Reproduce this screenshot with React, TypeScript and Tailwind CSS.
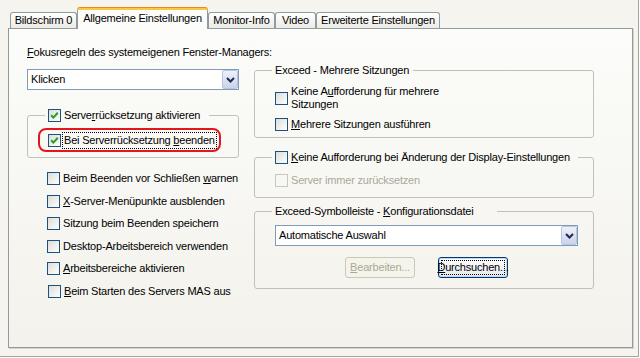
import React from 'react';

type BoxProps = { checked?: boolean; disabled?: boolean };

const Box = ({ checked, disabled }: BoxProps) => (
  <span
    className={`flex h-[13px] w-[13px] shrink-0 items-center justify-center border ${
      disabled
        ? 'border-[#cac8bb] bg-[#f7f7f3]'
        : 'border-[#1c5180] bg-gradient-to-br from-[#dcdcd7] to-white'
    }`}
  >
    {checked && (
      <svg width="9" height="9" viewBox="0 0 9 9">
        <polyline points="1.2,4.2 3.4,6.6 7.8,1.8" fill="none" stroke="#21a121" strokeWidth="2" />
      </svg>
    )}
  </span>
);

type CheckProps = BoxProps & { children: React.ReactNode; className?: string };

const Check = ({ checked, disabled, children, className = '' }: CheckProps) => (
  <div className={`flex items-center ${className}`}>
    <Box checked={checked} disabled={disabled} />
    <span className={`ml-[3px] whitespace-nowrap ${disabled ? 'text-[#aca899]' : ''}`}>{children}</span>
  </div>
);

const Combo = ({ value, className = '' }: { value: string; className?: string }) => (
  <div className={`flex h-[21px] items-center border border-[#7f9db9] bg-white pl-[3px] ${className}`}>
    <span className="flex-1">{value}</span>
    <span className="flex h-[19px] w-[16px] items-center justify-center rounded-[2px] border border-[#b9c5e0] bg-gradient-to-b from-[#eef1f8] to-[#c9d3ea]">
      <svg width="9" height="6" viewBox="0 0 9 6">
        <path d="M1 1 L4.5 4.5 L8 1" fill="none" stroke="#1f2a55" strokeWidth="2" />
      </svg>
    </span>
  </div>
);

const Tab = ({ children, w }: { children: React.ReactNode; w: string }) => (
  <div
    className={`flex h-[16px] items-center justify-center rounded-t-[3px] border border-b-0 border-[#919b9c] bg-gradient-to-b from-white to-[#ecebe5] ${w}`}
  >
    {children}
  </div>
);

const groupBox = 'rounded-[3px] border border-[#c3c1b6]';

export default function App() {
  return (
    <div className="h-[358px] w-[640px] overflow-hidden bg-[#f5f4ef] font-['Liberation_Sans',Arial,sans-serif] text-[11px] leading-[13px] tracking-[-0.2px] text-black shadow-[inset_-1px_-1px_0_#ffffff,inset_-2px_-2px_0_#a5a49c]">
      {/* tab strip */}
      <div className="flex h-[28px] items-end pl-[10px]">
        <Tab w="w-[67px]">Bildschirm 0</Tab>
        <div className="relative z-10 -mb-px flex h-[22px] w-[131px] flex-col">
          <div className="h-[3px] rounded-t-[3px] border-t border-[#e68b2c] bg-[#ffc73c]" />
          <div className="flex flex-1 items-center justify-center border-x border-[#919b9c] bg-[#fcfcfb] pb-[2px]">
            Allgemeine Einstellungen
          </div>
        </div>
        <Tab w="w-[67px]">Monitor-Info</Tab>
        <Tab w="w-[41px]">Video</Tab>
        <Tab w="w-[124px]">Erweiterte Einstellungen</Tab>
      </div>

      {/* tab page */}
      <div className="ml-[8px] flex h-[320px] w-[625px] gap-[15px] border border-[#919b9c] bg-gradient-to-b from-[#fcfcfa] to-[#f3f2ec] pl-[18px] shadow-[1px_1px_0_#d6d4c8]">
        {/* left column */}
        <div className="w-[212px] pt-[17px]">
          <div className="whitespace-nowrap">
            <u>F</u>okusregeln des systemeigenen Fenster-Managers:
          </div>
          <Combo className="mt-[10px]" value="Klicken" />

          <fieldset className={`mt-[19px] pb-[5px] pl-[20px] ${groupBox}`}>
            <legend className="-ml-[3px] w-[164px] px-[3px]">
              <Check checked>
                Serve<u>r</u>rücksetzung aktivieren
              </Check>
            </legend>
            <div className="-ml-[10px] mt-[6px] flex h-[24px] w-[183px] items-center rounded-[8px] border-2 border-[#e4161c] pl-[8px]">
              <Box checked />
              <span className="ml-[1px] whitespace-nowrap border border-dotted border-black px-[1px] py-px">
                Bei Serverrücksetzung <u>b</u>eenden
              </span>
            </div>
          </fieldset>

          <div className="ml-[20px] mt-[14px] flex flex-col gap-[9.6px]">
            <Check>
              Beim Beenden vor Schließen <u>w</u>arnen
            </Check>
            <Check>
              <u>X</u>-Server-Menüpunkte ausblenden
            </Check>
            <Check>Sitzung beim Beenden speichern</Check>
            <Check>Desktop-Arbeitsbereich verwenden</Check>
            <Check>
              <u>A</u>rbeitsbereiche aktivieren
            </Check>
            <Check className="ml-px">
              <u>B</u>eim Starten des Servers MAS aus
            </Check>
          </div>
        </div>

        {/* right column */}
        <div className="w-[340px] pt-[35px]">
          <fieldset className={`pb-[6px] pl-[20px] pr-[15px] ${groupBox}`}>
            <legend className="-ml-[3px] w-[141px] whitespace-nowrap px-[3px]">Exceed - Mehrere Sitzungen</legend>
            <Check className="mt-[8px]">
              Keine A<u>u</u>fforderung für mehrere
              <br />
              Sitzungen
            </Check>
            <Check className="mt-[7px]">
              <u>M</u>ehrere Sitzungen ausführen
            </Check>
          </fieldset>

          <fieldset className={`mt-[13px] pb-[10px] pl-[20px] pr-[15px] ${groupBox}`}>
            <legend className="-ml-[3px] w-[306px] px-[3px]">
              <Check>
                <u>K</u>eine Aufforderung bei Änderung der Display-Einstellungen
              </Check>
            </legend>
            <Check className="mt-[10px]" disabled>
              Server immer zurücksetzen
            </Check>
          </fieldset>

          <fieldset className={`mt-[7px] pb-[10px] pl-[20px] pr-[15px] ${groupBox}`}>
            <legend className="-ml-[3px] w-[225px] whitespace-nowrap px-[3px]">
              Exceed-Symbolleiste - <u>K</u>onfigurationsdatei
            </legend>
            <Combo className="mt-[7px]" value="Automatische Auswahl" />
            <div className="mt-[11px] flex justify-center gap-[23px]">
              <span className="flex h-[21px] w-[70px] items-center justify-center rounded-[3px] border border-[#c9c7ba] bg-[#f5f4ea] text-[#aca899]">
                <u>B</u>earbeiten...
              </span>
              <span className="flex h-[21px] w-[70px] items-center justify-center rounded-[3px] border border-[#003c74] bg-gradient-to-b from-white to-[#e6e6ee] p-[2px] shadow-[inset_0_0_0_1px_#c6d7f5]">
                <span className="flex h-full w-full items-center justify-center border border-dotted border-black">
                  <u>D</u>urchsuchen...
                </span>
              </span>
            </div>
          </fieldset>
        </div>
      </div>
    </div>
  );
}
